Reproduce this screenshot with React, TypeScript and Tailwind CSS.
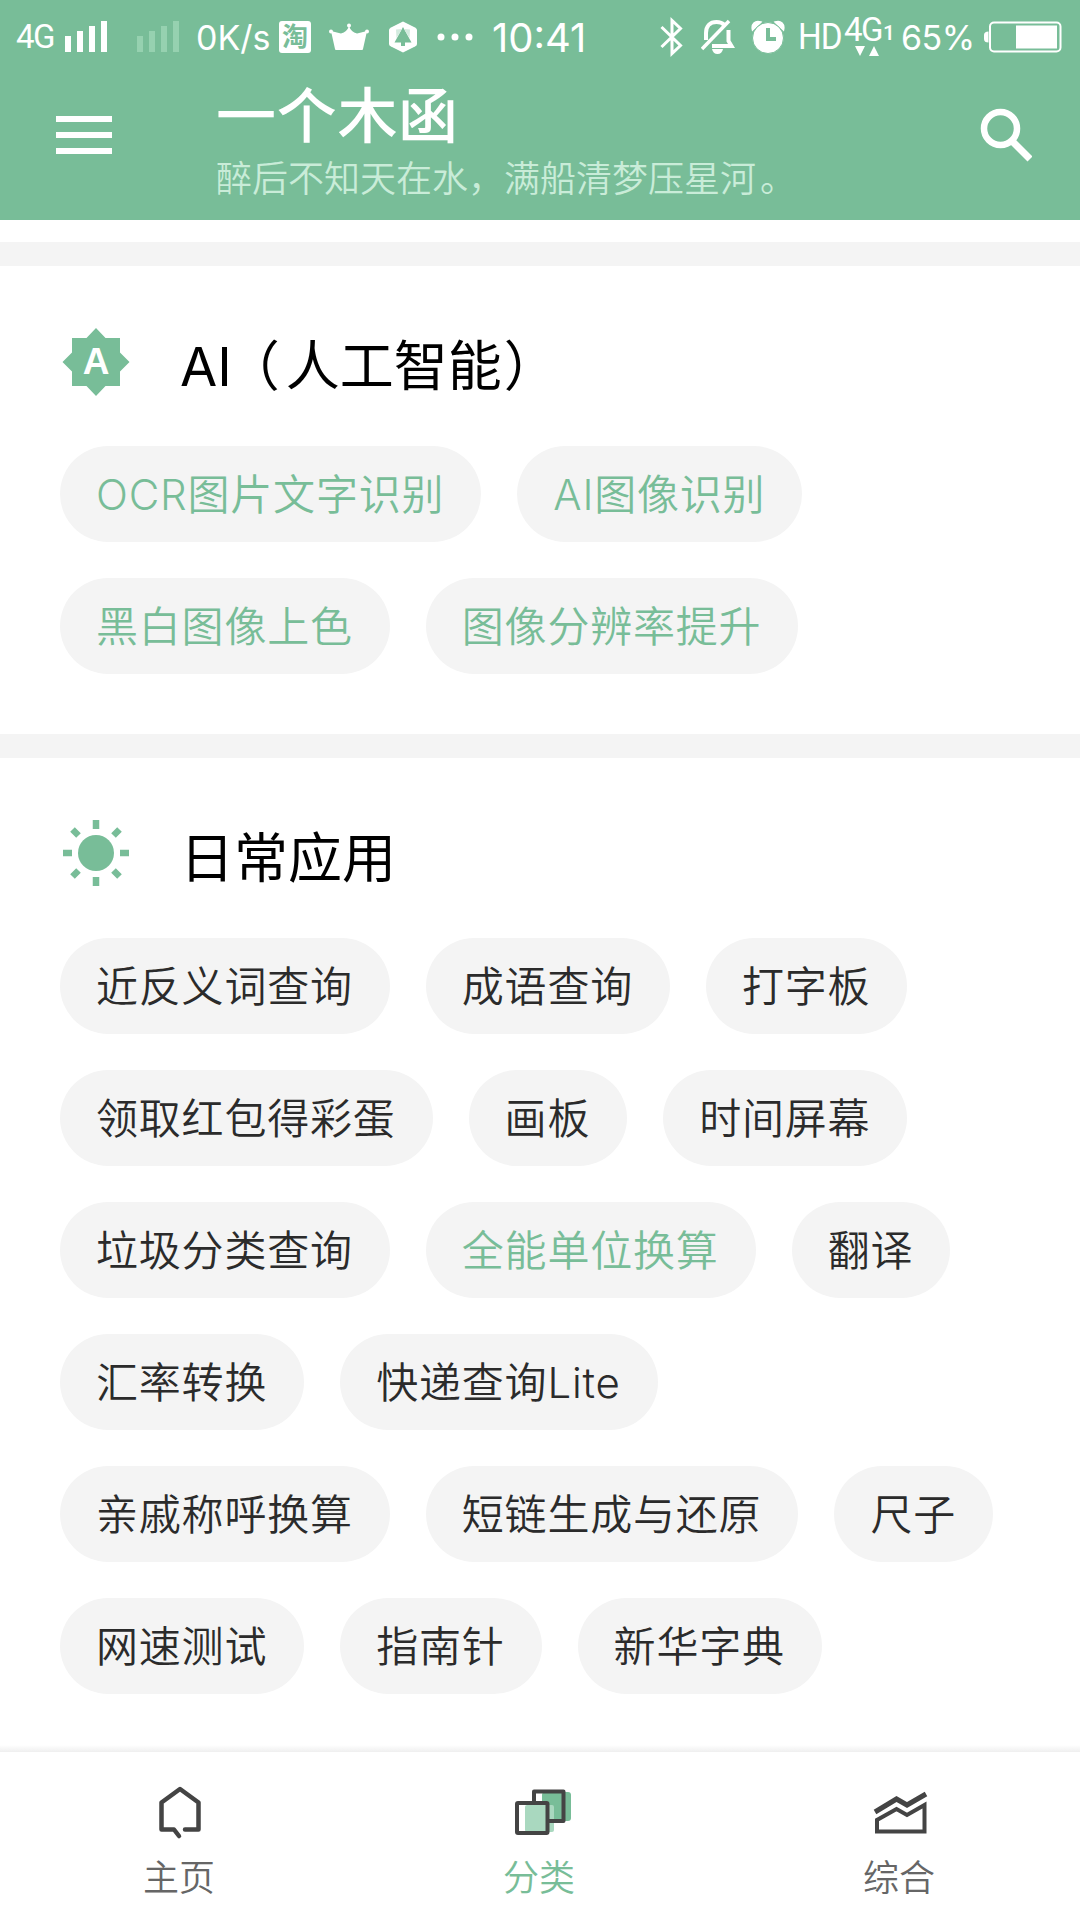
import clsx from "clsx";
import type { ReactNode } from "react";

interface Tool {
  name: string;
  highlighted?: boolean;
}

const aiTools: Tool[] = [
  { name: "OCR图片文字识别", highlighted: true },
  { name: "AI图像识别", highlighted: true },
  { name: "黑白图像上色", highlighted: true },
  { name: "图像分辨率提升", highlighted: true },
];

const dailyTools: Tool[] = [
  { name: "近反义词查询" },
  { name: "成语查询" },
  { name: "打字板" },
  { name: "领取红包得彩蛋" },
  { name: "画板" },
  { name: "时间屏幕" },
  { name: "垃圾分类查询" },
  { name: "全能单位换算", highlighted: true },
  { name: "翻译" },
  { name: "汇率转换" },
  { name: "快递查询Lite" },
  { name: "亲戚称呼换算" },
  { name: "短链生成与还原" },
  { name: "尺子" },
  { name: "网速测试" },
  { name: "指南针" },
  { name: "新华字典" },
];

function SignalBars({ className }: { className?: string }) {
  return (
    <svg
      width="43"
      height="32"
      viewBox="0 0 43 32"
      fill="currentColor"
      className={clsx("shrink-0", className)}
    >
      <rect x="0" y="15" width="6" height="16" />
      <rect x="12" y="10" width="6" height="21" />
      <rect x="24" y="5" width="6" height="26" />
      <rect x="36" y="0" width="6" height="31" />
    </svg>
  );
}

function StatusBar() {
  return (
    <div className="flex h-[74px] items-center whitespace-nowrap pl-4 text-white">
      <span className="w-[49px] font-[Roboto,sans-serif] text-[33px] tracking-[-1.5px]">4G</span>
      <SignalBars />
      <SignalBars className="ml-[29px] text-[#96d1b0]" />
      <span className="ml-4 w-[83px] text-[34px]">0K/s</span>
      <span className="flex size-8 shrink-0 items-center justify-center rounded-[3px] bg-white text-[26px] font-bold leading-none text-[#78bd98]">
        淘
      </span>
      <svg width="40" height="28" viewBox="0 0 40 28" fill="currentColor" className="ml-[18px] shrink-0">
        <circle cx="20" cy="2.5" r="2" />
        <circle cx="2" cy="8.5" r="2" />
        <circle cx="38" cy="8.5" r="2" />
        <path d="M2 8 L12 10.500 Q18 9 20 3 Q22 9 28 10.500 L38 8 L34 26 Q34 27 33 27 H7 Q6 27 6 26 Z" />
      </svg>
      <svg width="28" height="32" viewBox="0 0 28 32" className="ml-5 shrink-0">
        <path
          d="M14 0.500 L26 6.500 Q28 7.500 28 9 V23 Q28 24.500 26 25.500 L14 31.500 L2 25.500 Q0 24.500 0 23 V9 Q0 7.500 2 6.500 Z"
          fill="white"
        />
        <path d="M14 6 L22.500 21.500 H16 V25 H12 V21.500 H5.500 Z" fill="#78bd98" />
        <path d="M7 8.500 L13 8 L7.500 17 Z M21 8.500 L15 8 L20.500 17 Z" fill="#d3ebdf" />
      </svg>
      <svg width="36" height="8" viewBox="0 0 36 8" fill="currentColor" className="ml-5 shrink-0">
        <circle cx="4" cy="4" r="3.500" />
        <circle cx="18" cy="4" r="3.500" />
        <circle cx="32" cy="4" r="3.500" />
      </svg>
      <span className="ml-[19px] w-[168px] pt-0.5 text-[40px]">10:41</span>

      <svg width="24" height="40" viewBox="0 0 24 40" fill="none" stroke="currentColor" strokeWidth="3" className="shrink-0">
        <path d="M1.500 10 L20.500 28.500 L12 36.500 V3.500 L20.500 11.500 L1.500 30" />
      </svg>
      <svg width="34" height="36" viewBox="0 0 34 36" fill="none" className="ml-[17px] shrink-0">
        <path
          d="M5 21 V14 C5 7 9 3 15.500 3 C19 3 21.500 4 23.500 6 M27.500 11 V22 L30.500 27 H11"
          stroke="currentColor"
          strokeWidth="4"
        />
        <path d="M1 30 L28 2" stroke="currentColor" strokeWidth="3.500" />
        <path d="M11 30 H22 Q21 35 16.500 35 Q12 35 11 30 Z" fill="currentColor" />
      </svg>
      <svg width="34" height="34" viewBox="0 0 34 34" className="ml-4 shrink-0">
        <path
          d="M1.500 10 C0 4 4 0 10 2 Z M24 2 C30 0 34 4 32.500 10 Z"
          fill="white"
          stroke="white"
          strokeWidth="1.500"
        />
        <circle cx="17" cy="18" r="15.500" fill="white" stroke="#78bd98" />
        <path d="M17 8 V19 H25" stroke="#78bd98" strokeWidth="4" fill="none" />
      </svg>
      <span className="ml-[13px] w-[46px] origin-left scale-x-90 font-[Roboto,sans-serif] text-[37px] tracking-[-1px]">
        HD
      </span>
      <div className="flex h-[40px] w-[57px] shrink-0 flex-col">
        <div className="flex h-7 items-end font-[Roboto,sans-serif] leading-none">
          <span className="w-[39px] text-[33px] leading-[31px] tracking-[-1.5px]">4G</span>
          <span className="text-[21px] font-medium leading-[24px]">1</span>
        </div>
        <svg width="26" height="11" viewBox="0 0 26 11" fill="currentColor" className="ml-[11px] mt-px">
          <path d="M0 0 H10 L5 10 Z M19 0 L24 10 H14 Z" />
        </svg>
      </div>
      <span className="w-[83px] text-[34px] tracking-[-0.5px]">65%</span>
      <svg width="78" height="32" viewBox="0 0 78 32" fill="none" className="shrink-0">
        <path d="M4.500 10.500 V21.500 Q0 21.500 0 18 V14 Q0 10.500 4.500 10.500 Z" fill="white" />
        <rect x="6" y="1.500" width="70.500" height="29" rx="4" stroke="white" strokeWidth="2" />
        <rect x="32" y="4.500" width="41" height="23" fill="white" />
      </svg>
    </div>
  );
}

function Header() {
  return (
    <header className="h-[220px] shrink-0 bg-[#78bd98]">
      <StatusBar />
      <div className="flex pl-14 pr-12">
        <svg width="56" height="38" viewBox="0 0 56 38" fill="white" className="mt-[42px]">
          <rect width="56" height="6" />
          <rect y="16" width="56" height="6" />
          <rect y="32" width="56" height="6" />
        </svg>
        <div className="ml-[104px] flex-1">
          <h1 className="mt-2 text-[60px] font-medium leading-[68px] tracking-[0.7px] text-white">
            一个木函
          </h1>
          <p className="mt-1 text-[36px] font-[350] leading-[50px] text-[#c9ecd8]">
            醉后不知天在水，满船清梦压星河<span className="ml-1">。</span>
          </p>
        </div>
        <svg width="52" height="54" viewBox="0 0 52 54" fill="none" stroke="white" className="mt-[34px]">
          <circle cx="20.500" cy="20.500" r="16.500" strokeWidth="6.500" />
          <path d="M33 34 L50 51" strokeWidth="7" />
        </svg>
      </div>
    </header>
  );
}

function BadgeIcon() {
  return (
    <svg width="68" height="68" viewBox="0 0 68 68">
      <path
        d="M34 0 L43.500 10 H58 V24.500 L67.500 34 L58 43.500 V58 H43.500 L34 68 L24.500 58 H10 V43.500 L0.500 34 L10 24.500 V10 H24.500 Z"
        fill="#78bd98"
      />
      <text
        x="34"
        y="46"
        textAnchor="middle"
        fill="white"
        className="font-['Liberation_Sans',sans-serif] text-[37px] font-bold"
      >
        A
      </text>
    </svg>
  );
}

function SunIcon() {
  return (
    <svg width="68" height="68" viewBox="0 1 68 68" fill="#78bd98" stroke="#78bd98">
      <circle cx="34" cy="34" r="18" stroke="none" />
      <path
        d="M34 1 V10 M34 58 V67 M1 34 H10 M58 34 H67 M10.500 10.500 L16.500 16.500 M51.500 51.500 L57.500 57.500 M57.500 10.500 L51.500 16.500 M16.500 51.500 L10.500 57.500"
        strokeWidth="6.500"
      />
    </svg>
  );
}

function ToolSection({
  icon,
  title,
  tools,
}: {
  icon: ReactNode;
  title: ReactNode;
  tools: Tool[];
}) {
  return (
    <section className="border-t-[24px] border-[#f4f4f4] pb-[60px] pl-[60px] pr-[84px] pt-[61px]">
      <div className="flex h-[70px] items-center pl-0.5">
        {icon}
        <h2 className="ml-[50px] pt-2.5 text-[54px] leading-[70px] text-black">{title}</h2>
      </div>
      <div className="mt-[49px] flex flex-wrap gap-9">
        {tools.map(({ name, highlighted }) => (
          <button
            key={name}
            className={clsx(
              "h-24 rounded-full bg-[#f4f4f4] pl-9 pr-[37px] text-[42px] font-[350] leading-[98px] tracking-[0.8px]",
              highlighted ? "text-[#78bd98]" : "text-[#2b2b2b]"
            )}
          >
            {name}
          </button>
        ))}
      </div>
    </section>
  );
}

function HomeIcon() {
  return (
    <svg width="56" height="56" viewBox="0 0 56 56" fill="none" stroke="#444" strokeWidth="4.500" strokeLinecap="round" strokeLinejoin="round">
      <path d="M27 50 L22 43.500 H9.500 V16.500 L28 3 L46.500 16.500 V43.500 H33" />
    </svg>
  );
}

function CategoryIcon() {
  return (
    <svg width="56" height="56" viewBox="0 0 56 56" fill="none" className="ml-[6px]">
      <rect x="27" y="6" width="29" height="29" rx="3" fill="#78bd98" />
      <rect x="10" y="19" width="29" height="27" rx="2" fill="#a9d8bf" />
      <path d="M19 17 V5.500 H48.500 V35 H34" stroke="#444" strokeWidth="4" strokeLinejoin="round" />
      <rect x="2" y="17" width="30.500" height="30" rx="1" stroke="#444" strokeWidth="4" />
    </svg>
  );
}

function ChartIcon() {
  return (
    <svg width="56" height="56" viewBox="0 0 56 56" fill="none" stroke="#444">
      <path d="M3 26 L24.500 13 L35 19 L54 8" strokeWidth="5" />
      <path d="M5 45.500 V34 L24.500 23 L35 29 L52.500 19 V45.500 Z" strokeWidth="4" />
    </svg>
  );
}

const tabs = [
  { label: "主页", icon: <HomeIcon /> },
  { label: "分类", icon: <CategoryIcon />, active: true },
  { label: "综合", icon: <ChartIcon /> },
];

function BottomNav() {
  return (
    <nav className="shrink-0">
      <div className="h-[7px] bg-linear-to-b from-white to-[#efefef]" />
      <div className="flex h-[168px] bg-white">
        {tabs.map(({ label, icon, active }) => (
          <button key={label} className="flex flex-1 flex-col items-center pt-[34px]">
            {icon}
            <span
              className={clsx(
                "mr-0.5 mt-3 text-[36px] font-[350] leading-[48px]",
                active ? "text-[#78bd98]" : "text-[#666]"
              )}
            >
              {label}
            </span>
          </button>
        ))}
      </div>
    </nav>
  );
}

export default function App() {
  return (
    <div className="flex h-[1920px] w-[1080px] flex-col overflow-hidden bg-white font-[Inter,'Noto_Sans_CJK_SC',sans-serif]">
      <Header />
      <main className="flex-1 overflow-hidden pt-[22px]">
        <ToolSection
          icon={<BadgeIcon />}
          title={
            // half-width brackets, spaced by hand
            <>
              AI
              <span className="ml-[21px] mr-1.5 [font-feature-settings:'halt']">（</span>
              人工智能
              <span className="ml-0.5 [font-feature-settings:'halt']">）</span>
            </>
          }
          tools={aiTools}
        />
        <ToolSection icon={<SunIcon />} title="日常应用" tools={dailyTools} />
      </main>
      <BottomNav />
    </div>
  );
}
